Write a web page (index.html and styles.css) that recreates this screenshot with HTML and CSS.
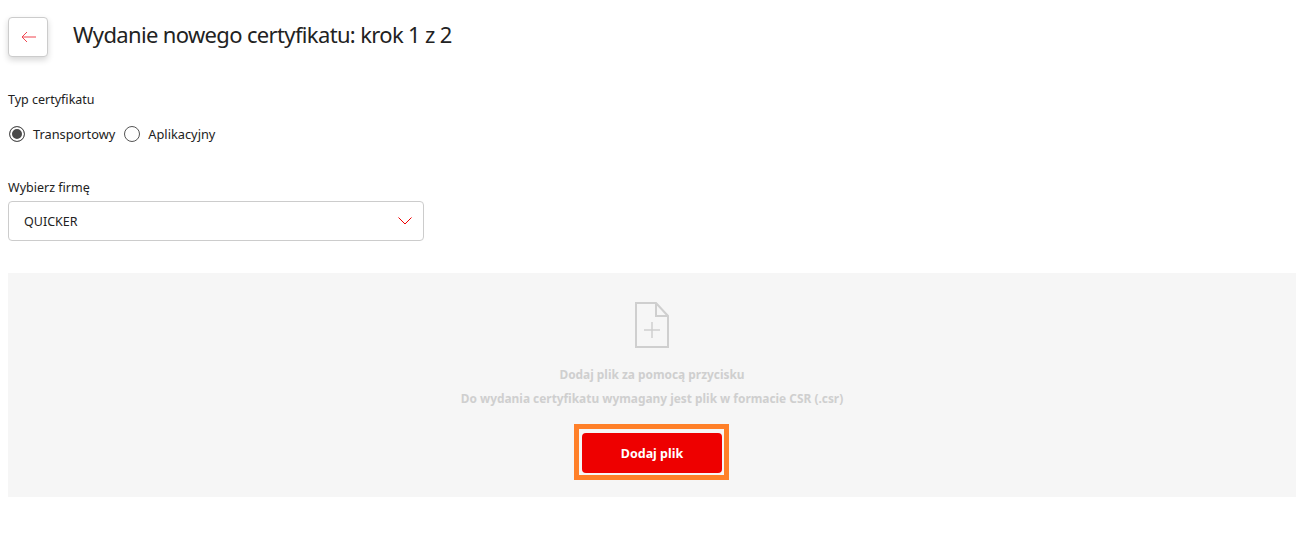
FILE: index.html
```html
<!DOCTYPE html>
<html lang="pl">
<head>
    <meta charset="UTF-8">
    <title>Wydanie nowego certyfikatu</title>
    <link rel="stylesheet" href="styles.css">
</head>
<body>
    <div class="page">
        <div class="header">
            <button class="back-btn" aria-label="Wstecz">
                <svg width="15" height="12" viewBox="0 0 15 12" fill="none" stroke="#f0454f" stroke-width="1">
                    <path d="M15 6H1M6 1L1 6L6 11"/>
                </svg>
            </button>
            <h1 class="title">Wydanie nowego certyfikatu: krok 1 z 2</h1>
        </div>

        <div class="field-label type-label">Typ certyfikatu</div>
        <div class="radio-row">
            <label class="radio">
                <span class="radio-mark checked"></span>
                Transportowy
            </label>
            <label class="radio">
                <span class="radio-mark"></span>
                Aplikacyjny
            </label>
        </div>

        <div class="field-label company-label">Wybierz firmę</div>
        <div class="select">
            <span>QUICKER</span>
            <svg width="14" height="8" viewBox="0 0 14 8" fill="none" stroke="#ee0000" stroke-width="1">
                <path d="M0.5 0.5L7 7L13.5 0.5"/>
            </svg>
        </div>

        <div class="upload">
            <svg class="file-icon" width="34" height="46" viewBox="0 0 34 46" fill="none" stroke="#cfcfcf" stroke-width="2">
                <path d="M1 1H21L33 14V45H1Z"/>
                <path d="M21 1V14H33"/>
                <path d="M17 20V36M9 28H25" stroke-width="1.5"/>
            </svg>
            <p class="upload-text first">Dodaj plik za pomocą przycisku</p>
            <p class="upload-text">Do wydania certyfikatu wymagany jest plik w formacie CSR (.csr)</p>
            <div class="highlight">
                <button class="add-btn">Dodaj plik</button>
            </div>
        </div>
    </div>
</body>
</html>
```

FILE: styles.css
```css
body {
    margin: 0;
    background-color: #fff;
    font-family: "Noto Sans", sans-serif;
    color: #222;
}
.page {
    padding: 17px 18px 0 8px;
}
.header {
    display: flex;
    align-items: center;
    gap: 25px;
}
.back-btn {
    display: flex;
    align-items: center;
    justify-content: center;
    width: 40px;
    height: 40px;
    padding: 0;
    background-color: #fff;
    border: 1px solid #ccc;
    border-radius: 4px;
    box-shadow: 0 3px 6px rgba(0, 0, 0, 0.16);
}
.title {
    margin: 0 0 6px;
    font-size: 22px;
    font-weight: 400;
    letter-spacing: -0.65px;
    line-height: 32px;
}
.field-label {
    font-size: 12.5px;
    line-height: 18px;
}
.type-label {
    margin-top: 34px;
}
.radio-row {
    display: flex;
    gap: 9px;
    margin-top: 16px;
    padding-left: 1px;
}
.radio {
    display: flex;
    align-items: center;
    gap: 8px;
    font-size: 12.8px;
    line-height: 18px;
}
.radio-mark {
    box-sizing: border-box;
    width: 16px;
    height: 16px;
    border: 1px solid #555;
    border-radius: 50%;
}
.radio-mark.checked {
    background-color: #4a4a4a;
    box-shadow: inset 0 0 0 2px #fff;
}
.company-label {
    margin-top: 36px;
}
.select {
    display: flex;
    align-items: center;
    justify-content: space-between;
    box-sizing: border-box;
    width: 416px;
    height: 40px;
    margin-top: 4px;
    padding: 0 11px 0 15px;
    border: 1px solid #ccc;
    border-radius: 4px;
    font-size: 12.5px;
}
.upload {
    display: flex;
    flex-direction: column;
    align-items: center;
    height: 224px;
    margin-top: 32px;
    padding-top: 29px;
    box-sizing: border-box;
    background-color: #f6f6f6;
}
.file-icon {
    display: block;
}
.upload-text {
    margin: 6px 0 0;
    font-size: 11.9px;
    font-weight: 700;
    line-height: 18px;
    color: #cfcfcf;
}
.upload-text.first {
    margin-top: 17px;
}
.highlight {
    margin-top: 17px;
    margin-right: 1px;
    padding: 4px 2px 2px 3px;
    border: 5px solid #ff8029;
}
.add-btn {
    display: block;
    width: 140px;
    height: 40px;
    background-color: #ee0000;
    color: #fff;
    border: none;
    border-radius: 4px;
    font-family: "Noto Sans", sans-serif;
    font-size: 12.5px;
    font-weight: 700;
}
```
